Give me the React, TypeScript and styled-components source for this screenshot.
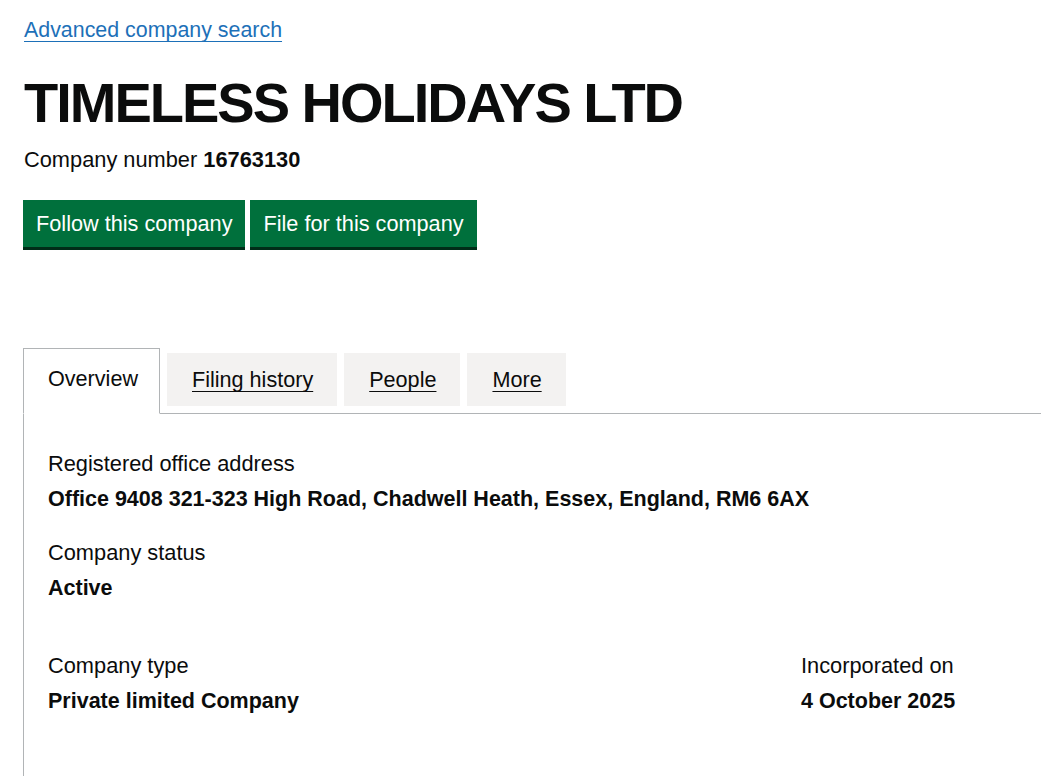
import React from 'react';
import styled, { createGlobalStyle } from 'styled-components';

const GlobalStyle = createGlobalStyle`
  html, body {
    margin: 0;
    padding: 0;
    background: #ffffff;
  }
  body {
    font-family: "Liberation Sans", Arial, sans-serif;
    color: #0b0c0c;
    -webkit-font-smoothing: antialiased;
  }
`;

const Page = styled.main`
  padding: 15px 0 0 23px;
`;

const BackLink = styled.a`
  display: inline-block;
  margin-left: 1px;
  font-size: 21.4px;
  line-height: 30px;
  color: #1d70b8;
  text-decoration: underline;
  text-decoration-thickness: 1px;
  text-underline-offset: 4px;
`;

const Heading = styled.h1`
  margin: 26px 0 0 1px;
  font-size: 56px;
  line-height: 64px;
  font-weight: 700;
  letter-spacing: -2px;
`;

const CompanyNumber = styled.p`
  margin: 10px 0 0 1px;
  font-size: 21.8px;
  line-height: 30px;

  strong {
    font-weight: 700;
  }
`;

const Actions = styled.div`
  display: flex;
  gap: 5px;
  margin-top: 25px;
`;

const Button = styled.button`
  font-family: inherit;
  font-size: 21.7px;
  line-height: 27px;
  color: #ffffff;
  background: #00703c;
  border: none;
  border-radius: 0;
  padding: 10px 13px;
  box-shadow: 0 3px 0 #002d18;
  cursor: pointer;
`;

const Tabs = styled.div`
  margin-top: 101px;
`;

const TabList = styled.ul`
  display: flex;
  align-items: flex-end;
  list-style: none;
  margin: 0;
  padding: 0;
  border-bottom: 1px solid #b1b4b6;
`;

const Tab = styled.li<{ $selected?: boolean }>`
  margin: 0 7px ${p => (p.$selected ? '-1px' : '7px')} 0;
  padding: ${p => (p.$selected ? '15px 21px 19px 24px' : '12px 24px 11px 25px')};
  background: ${p => (p.$selected ? '#ffffff' : '#f3f2f1')};
  border: ${p => (p.$selected ? '1px solid #b1b4b6' : 'none')};
  border-bottom: ${p => (p.$selected ? '1px solid #ffffff' : 'none')};
  font-size: 21.6px;
  line-height: 30px;

  a {
    color: #0b0c0c;
    text-decoration: ${p => (p.$selected ? 'none' : 'underline')};
    text-decoration-thickness: 1px;
    text-underline-offset: 4px;
  }
`;

const Panel = styled.section`
  border-left: 1px solid #b1b4b6;
  padding: 35px 24px 60px;
`;

const Row = styled.div`
  display: grid;
  grid-template-columns: 753px auto;
`;

const Field = styled.dl<{ $gap?: number }>`
  margin: 0 0 ${p => p.$gap ?? 24}px;
`;

const Label = styled.dt`
  font-size: 21.8px;
  line-height: 30px;
  margin-bottom: 5px;
`;

const Value = styled.dd`
  margin: 0;
  font-size: 21.5px;
  line-height: 30px;
  font-weight: 700;
`;

const tabs = ['Overview', 'Filing history', 'People', 'More'];

export default function App() {
  return (
    <>
      <GlobalStyle />
      <Page>
        <BackLink href="#">Advanced company search</BackLink>
        <Heading>TIMELESS HOLIDAYS LTD</Heading>
        <CompanyNumber>
          Company number <strong>16763130</strong>
        </CompanyNumber>
        <Actions>
          <Button>Follow this company</Button>
          <Button>File for this company</Button>
        </Actions>
        <Tabs>
          <TabList>
            {tabs.map((t, i) => (
              <Tab key={t} $selected={i === 0}>
                <a href="#">{t}</a>
              </Tab>
            ))}
          </TabList>
          <Panel>
            <Field>
              <Label>Registered office address</Label>
              <Value>Office 9408 321-323 High Road, Chadwell Heath, Essex, England, RM6 6AX</Value>
            </Field>
            <Field $gap={48}>
              <Label>Company status</Label>
              <Value>Active</Value>
            </Field>
            <Row>
              <Field>
                <Label>Company type</Label>
                <Value>Private limited Company</Value>
              </Field>
              <Field>
                <Label>Incorporated on</Label>
                <Value>4 October 2025</Value>
              </Field>
            </Row>
          </Panel>
        </Tabs>
      </Page>
    </>
  );
}
